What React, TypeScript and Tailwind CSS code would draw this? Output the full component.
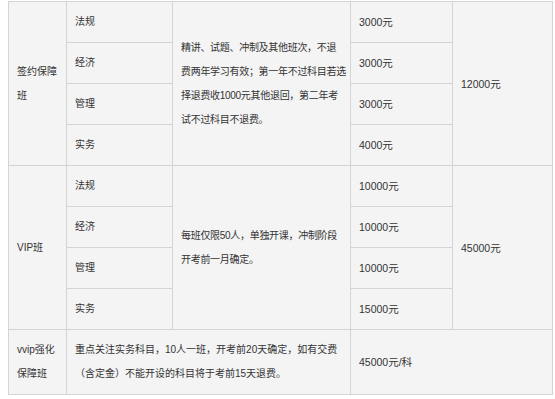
const font = { fontFamily: '"Liberation Sans", "Noto Sans CJK SC", sans-serif' };

const cell = 'border border-[#d4d4d4] px-[8px] py-0 align-middle leading-[24px]';

type Group = {
  name: React.ReactNode;
  subjects: { subject: string; price: string }[];
  desc: React.ReactNode;
  total: string;
};

const groups: Group[] = [
  {
    name: (
      <>
        签约保障
        <br />班
      </>
    ),
    subjects: [
      { subject: '法规', price: '3000元' },
      { subject: '经济', price: '3000元' },
      { subject: '管理', price: '3000元' },
      { subject: '实务', price: '4000元' },
    ],
    desc: (
      <>
        精讲、试题、冲制及其他班次，不退
        <br />
        费两年学习有效；第一年不过科目若选
        <br />
        择退费收1000元其他退回，第二年考
        <br />
        试不过科目不退费。
      </>
    ),
    total: '12000元',
  },
  {
    name: 'VIP班',
    subjects: [
      { subject: '法规', price: '10000元' },
      { subject: '经济', price: '10000元' },
      { subject: '管理', price: '10000元' },
      { subject: '实务', price: '15000元' },
    ],
    desc: (
      <>
        每班仅限50人，单独开课，冲制阶段
        <br />
        开考前一月确定。
      </>
    ),
    total: '45000元',
  },
];

export default function App() {
  return (
    <div className="w-[555px] h-[399px] bg-white pt-[1px] pl-[8px]" style={font}>
      <table className="table-fixed border-collapse w-[544px] bg-[#f4f4f4] text-[10px] text-[#333333]">
        <colgroup>
          <col className="w-[58px]" />
          <col className="w-[106px]" />
          <col className="w-[178px]" />
          <col className="w-[102px]" />
          <col className="w-[100px]" />
        </colgroup>
        <tbody>
          {groups.map((g, gi) =>
            g.subjects.map((s, si) => (
              <tr key={`${gi}-${si}`} className="h-[41px]">
                {si === 0 && (
                  <td rowSpan={4} className={`${cell} whitespace-nowrap`}>
                    {g.name}
                  </td>
                )}
                <td className={cell}>{s.subject}</td>
                {si === 0 && (
                  <td rowSpan={4} className={`${cell} whitespace-nowrap tracking-[-0.3px]`}>
                    {g.desc}
                  </td>
                )}
                <td className={`${cell} text-[10.5px]`}>{s.price}</td>
                {si === 0 && (
                  <td rowSpan={4} className={`${cell} text-[10.5px]`}>
                    {g.total}
                  </td>
                )}
              </tr>
            ))
          )}
          <tr className="h-[65px]">
            <td className={`${cell} whitespace-nowrap`}>
              vvip强化
              <br />
              保障班
            </td>
            <td colSpan={2} className={`${cell} whitespace-nowrap`}>
              重点关注实务科目，10人一班，开考前20天确定，如有交费
              <br />
              （含定金）不能开设的科目将于考前15天退费。
            </td>
            <td colSpan={2} className={`${cell} text-[10.5px]`}>
              45000元/科
            </td>
          </tr>
        </tbody>
      </table>
    </div>
  );
}
